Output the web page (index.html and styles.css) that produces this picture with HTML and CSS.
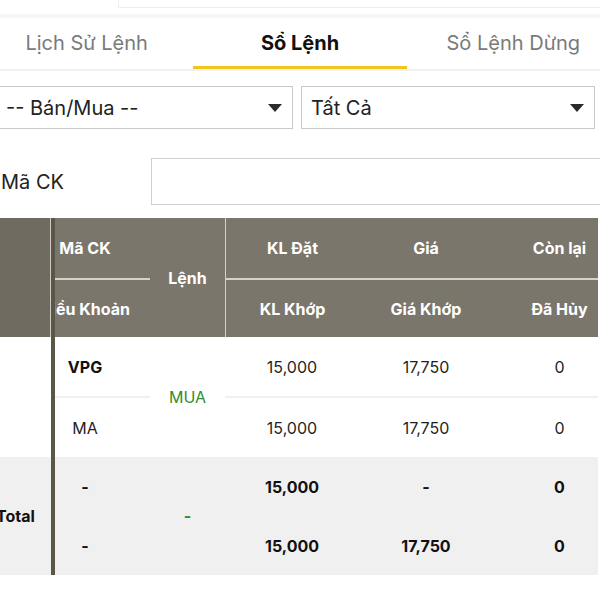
FILE: index.html
```html
<!DOCTYPE html>
<html lang="vi">
<head>
    <meta charset="UTF-8">
    <meta name="viewport" content="width=device-width, initial-scale=1.0">
    <title>Sổ Lệnh</title>
    <link rel="stylesheet" href="styles.css">
</head>
<body>
<div class="page">
    <div class="topbar"><div class="topbox"></div></div>

    <nav class="tabs">
        <a class="tab">Lịch Sử Lệnh</a>
        <a class="tab active">Sổ Lệnh</a>
        <a class="tab">Sổ Lệnh Dừng</a>
    </nav>

    <div class="filters">
        <div class="select">-- Bán/Mua --<span class="caret"></span></div>
        <div class="select">Tất Cả<span class="caret"></span></div>
    </div>

    <div class="search">
        <label for="symbol">Mã CK</label>
        <input type="text" id="symbol">
    </div>

    <div class="orders">
        <!-- frozen first column -->
        <div class="frozen">
            <div class="frozen-head"></div>
            <div class="frozen-body"></div>
            <div class="frozen-total">Total</div>
        </div>

        <table class="grid">
            <colgroup>
                <col class="c-code">
                <col class="c-side">
                <col class="c-qty">
                <col class="c-price">
                <col class="c-left">
            </colgroup>
            <thead>
                <tr class="h1">
                    <th>Mã CK</th>
                    <th rowspan="2" class="side">Lệnh</th>
                    <th class="first">KL Đặt</th>
                    <th>Giá</th>
                    <th class="last">Còn lại</th>
                </tr>
                <tr class="h2">
                    <th>Điều Khoản</th>
                    <th class="first">KL Khớp</th>
                    <th>Giá Khớp</th>
                    <th class="last">Đã Hủy</th>
                </tr>
            </thead>
            <tbody>
                <tr class="r1">
                    <td class="code">VPG</td>
                    <td rowspan="2" class="side buy">MUA</td>
                    <td>15,000</td>
                    <td>17,750</td>
                    <td class="last">0</td>
                </tr>
                <tr class="r2">
                    <td>MA</td>
                    <td>15,000</td>
                    <td>17,750</td>
                    <td class="last">0</td>
                </tr>
                <tr class="t1">
                    <td>-</td>
                    <td rowspan="2" class="side buy">-</td>
                    <td>15,000</td>
                    <td>-</td>
                    <td class="last">0</td>
                </tr>
                <tr class="t2">
                    <td>-</td>
                    <td>15,000</td>
                    <td>17,750</td>
                    <td class="last">0</td>
                </tr>
            </tbody>
        </table>
    </div>
</div>
</body>
</html>
```

FILE: styles.css
```css
body {
    margin: 0;
    padding: 0;
    font-family: Inter, "Liberation Sans", sans-serif;
    color: #1f1f1f;
    background-color: white;
    overflow: hidden;
}
.page {
    width: 640px;
    margin-left: -20px;
}
.topbar {
    height: 14px;
    padding-left: 138px;
    border-bottom: 4px solid #f5f5f5;
}
.topbox {
    height: 7px;
    border-left: 1px solid #eeeeee;
    border-bottom: 1px solid #eeeeee;
}
.tabs {
    display: grid;
    grid-template-columns: repeat(3, 1fr);
    border-bottom: 2px solid #f1f1f1;
}
.tab {
    height: 51px;
    display: flex;
    align-items: center;
    justify-content: center;
    font-size: 20px;
    color: #7a7a7a;
    border-bottom: 3px solid transparent;
    box-sizing: border-box;
    padding-top: 1px;
}
.tab.active {
    color: #111;
    font-weight: bold;
    border-bottom-color: #f4c51c;
}
.filters {
    display: flex;
    gap: 8px;
    padding: 15px 0 0 19px;
}
.select {
    width: 294px;
    height: 43px;
    box-sizing: border-box;
    border: 1px solid #c9c9c9;
    display: flex;
    align-items: center;
    justify-content: space-between;
    padding: 0 10px 0 6px;
    font-size: 20px;
    color: #222;
}
.caret {
    width: 0;
    height: 0;
    border-left: 7px solid transparent;
    border-right: 7px solid transparent;
    border-top: 8px solid #2b2b2b;
}
.filters .select + .select {
    padding-left: 9px;
}
.search {
    display: flex;
    align-items: center;
    padding: 29px 0 0 21px;
}
.search label {
    width: 150px;
    font-size: 20px;
    color: #222;
}
.search input {
    width: 460px;
    height: 47px;
    box-sizing: border-box;
    border: 1px solid #cfcfcf;
    margin: 0;
}
.orders {
    position: relative;
    margin-top: 13px;
    padding-left: 40px;
}
.frozen {
    position: absolute;
    left: 0;
    top: 0;
    width: 71px;
    display: flex;
    flex-direction: column;
    border-right: 4px solid #5c5649;
    z-index: 1;
}
.frozen-head {
    height: 119px;
    background-color: #706b61;
    border-right: 1px solid #cfcac1;
}
.frozen-body {
    height: 120px;
    background-color: white;
}
.frozen-total {
    height: 118px;
    background-color: #f0f0f0;
    display: flex;
    align-items: center;
    justify-content: center;
    font-size: 16px;
    font-weight: bold;
    color: #111;
}
.grid {
    table-layout: fixed;
    border-collapse: separate;
    border-spacing: 0;
    width: 578px;
    font-size: 16px;
}
.c-code { width: 130px; }
.c-side { width: 75px; }
.c-qty { width: 134px; }
.c-price { width: 134px; }
.c-left { width: 105px; }
.grid th,
.grid td {
    padding: 0;
    text-align: center;
    vertical-align: middle;
    white-space: nowrap;
}
.grid th {
    background-color: #7b766c;
    color: white;
    font-weight: bold;
}
.grid th.first {
    border-left: 1px solid #d6d2ca;
}
.grid .last {
    padding-left: 28px;
}
.grid tr.h1 th {
    height: 60px;
    border-bottom: 2px solid #d6d2ca;
}
.grid tr.h1 th.side {
    border-bottom: none;
}
.grid tr.h2 th {
    height: 57px;
}
.grid tr.r1 td {
    height: 59px;
    border-bottom: 2px solid #f0f0f0;
}
.grid tr.r1 td.side {
    border-bottom: none;
}
.grid tr.r2 td {
    height: 59px;
}
.grid tr.t1 td,
.grid tr.t2 td {
    height: 59px;
    background-color: #f0f0f0;
    font-weight: bold;
    color: #111;
}
.grid td.code {
    font-weight: bold;
    color: #111;
}
.grid tr td.buy {
    color: #2f8f2f;
}
.grid tr.t1 td.buy {
    color: #2f8f2f;
}
```
